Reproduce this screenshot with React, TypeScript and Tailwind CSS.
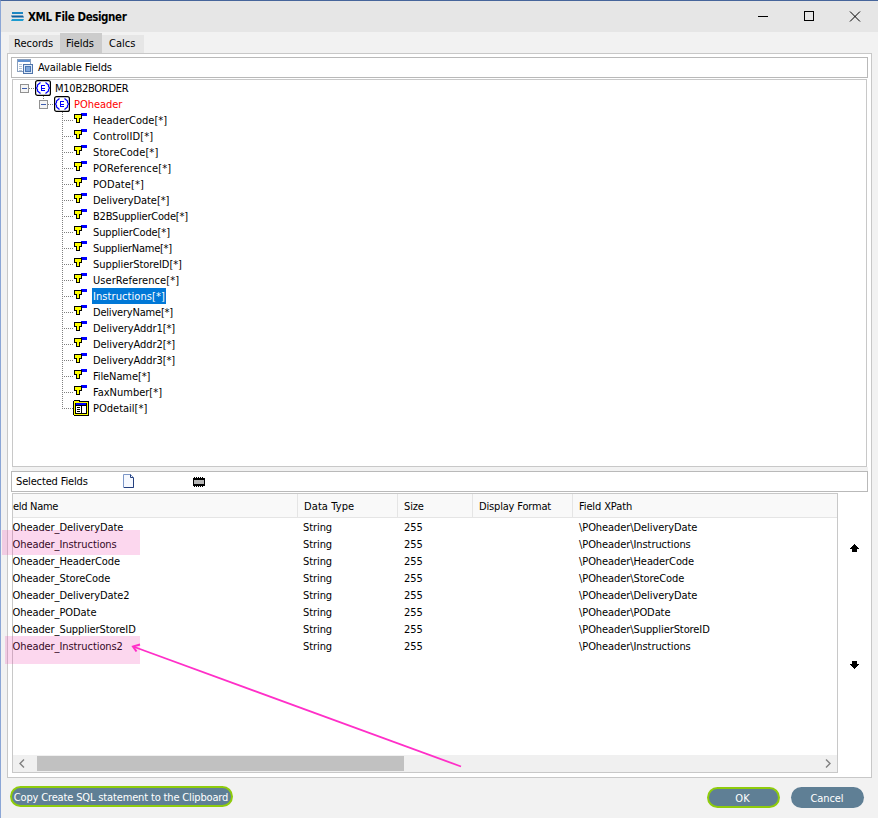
import type { ReactNode } from "react";

interface TreeField {
  name: string;
  tracking?: string;
  selected?: boolean;
}

interface SelectedField {
  name: string;
  path: string;
  highlight?: string;
}

const treeFields: TreeField[] = [
  { name: "HeaderCode" },
  { name: "ControlID", tracking: "tracking-[0.1px]" },
  { name: "StoreCode", tracking: "tracking-[0.1px]" },
  { name: "POReference", tracking: "tracking-[0.15px]" },
  { name: "PODate", tracking: "tracking-[0.1px]" },
  { name: "DeliveryDate", tracking: "tracking-[-0.07px]" },
  { name: "B2BSupplierCode", tracking: "tracking-[-0.2px]" },
  { name: "SupplierCode", tracking: "tracking-[-0.13px]" },
  { name: "SupplierName", tracking: "tracking-[-0.25px]" },
  { name: "SupplierStoreID", tracking: "tracking-[-0.07px]" },
  { name: "UserReference", tracking: "tracking-[0.07px]" },
  { name: "Instructions", tracking: "tracking-[0.07px]", selected: true },
  { name: "DeliveryName", tracking: "tracking-[-0.2px]" },
  { name: "DeliveryAddr1", tracking: "tracking-[-0.07px]" },
  { name: "DeliveryAddr2", tracking: "tracking-[-0.07px]" },
  { name: "DeliveryAddr3", tracking: "tracking-[-0.07px]" },
  { name: "FileName", tracking: "tracking-[-0.1px]" },
  { name: "FaxNumber" },
];

const selectedFields: SelectedField[] = [
  { name: "Oheader_DeliveryDate", path: "DeliveryDate" },
  { name: "Oheader_Instructions", path: "Instructions", highlight: "-left-[11px] -top-[6px] w-[138px] h-[25px]" },
  { name: "Oheader_HeaderCode", path: "HeaderCode" },
  { name: "Oheader_StoreCode", path: "StoreCode" },
  { name: "Oheader_DeliveryDate2", path: "DeliveryDate" },
  { name: "Oheader_PODate", path: "PODate" },
  { name: "Oheader_SupplierStoreID", path: "SupplierStoreID" },
  { name: "Oheader_Instructions2", path: "Instructions", highlight: "-left-[8px] -top-[2px] w-[135px] h-[28px]" },
];

function LogoIcon() {
  return (
    <svg width="13" height="10" viewBox="0 0 13 10">
      <path d="M1 0h11v2H1z" fill="#1c86c2" />
      <path d="M0 3.500h12l1 2H1z" fill="#0d5f9e" />
      <path d="M1 7h12l-1 2H0z" fill="#1c9bd0" />
    </svg>
  );
}

function FormIcon() {
  return (
    <svg width="17" height="16" viewBox="0 0 17 16" shapeRendering="crispEdges" className="mb-px">
      <rect x="0.5" y="0.5" width="13" height="12" fill="#fff" stroke="#8aa0be" />
      <rect x="1" y="1" width="12" height="2" fill="#5f8fd0" />
      <path d="M2 5.500h3M6 5.500h6M2 7.500h3M2 9.500h3M2 11.500h3" stroke="#b4c4d8" />
      <rect x="6.5" y="5.5" width="9" height="9" fill="#dce9f8" stroke="#4f74aa" />
      <rect x="8.5" y="7.5" width="5" height="5" fill="#7ea6da" stroke="#4a76b4" />
    </svg>
  );
}

function ElementIcon() {
  return (
    <svg width="16" height="16" viewBox="0 0 16 16" className="shrink-0">
      <rect x="0.6" y="0.6" width="14.800" height="14.800" rx="2" fill="#fff" stroke="#000" strokeWidth="1.200" />
      <path
        d="M5.500 2.500L2.500 5v1.500L1.500 8l1 1.500V11l3 2.500M10.500 2.500l3 2.500v1.500l1 1.500-1 1.500V11l-3 2.500"
        fill="none"
        stroke="#00f"
        strokeWidth="1.200"
      />
      <path d="M10 5.500H6.500v5H10M6.500 8.500H9.500" fill="none" stroke="#00f" shapeRendering="crispEdges" />
    </svg>
  );
}

function TextNodeIcon() {
  return (
    <svg width="14" height="11" viewBox="0 0 14 11" shapeRendering="crispEdges" className="shrink-0">
      <rect x="7" y="0" width="6" height="3" fill="#00f" />
      <path d="M0 1h8v5H6v4H2V6H0z" fill="#000" />
      <path d="M1 2h6v3H5v4H3V5H1z" fill="#ff0" />
    </svg>
  );
}

function DetailIcon() {
  return (
    <svg width="16" height="16" viewBox="0 0 16 16" shapeRendering="crispEdges" className="shrink-0">
      <path d="M1 0h5l1 1h8l1 1v13l-1 1H1l-1-1V1z" fill="#000" />
      <path d="M1 1h5v1h9v13H1z" fill="#ff0" />
      <rect x="2" y="3" width="12" height="11" fill="#000" />
      <rect x="3" y="3" width="10" height="2" fill="#00f" />
      <path d="M3 6h5v7H3zM9 6h4v7H9z" fill="#fff" />
      <path d="M4 7.500h3M4 9.500h3M4 11.500h3" stroke="#000" />
    </svg>
  );
}

function Expander({ linked }: { linked?: boolean }) {
  return (
    <svg width="9" height="16" viewBox="0 0 9 16" shapeRendering="crispEdges" className="shrink-0">
      {linked && <path d="M4.500 0v4" stroke="#808080" strokeDasharray="1 1" />}
      <rect x="0.5" y="4.500" width="8" height="8" fill="#f4f4f4" stroke="#919191" />
      <path d="M2 8.500h5" stroke="#3c5cae" />
    </svg>
  );
}

function Dots({ className }: { className: string }) {
  return (
    <svg height="1" className={`shrink-0 ${className}`} shapeRendering="crispEdges">
      <path d="M0 0.500h20" stroke="#808080" strokeDasharray="1 1" />
    </svg>
  );
}

function Field({ name, tracking = "", selected }: TreeField) {
  return (
    <div className="flex h-4 items-center">
      <Dots className="w-[11px]" />
      <div className="w-[19px] pb-[3px] pl-px">
        <TextNodeIcon />
      </div>
      <span className={`h-4 px-px leading-[18px] ${tracking} ${selected ? "bg-[#0078d7] text-white" : ""}`}>{name}[*]</span>
    </div>
  );
}

function Tab({ children, active }: { children: ReactNode; active?: boolean }) {
  return (
    <div className={`leading-4 ${active ? "h-5 w-[42px] bg-[#cccccc] pl-[6px] pt-[3px]" : "h-[18px] bg-[#e6e6e6] pl-[5px] pt-px"}`}>
      {children}
    </div>
  );
}

export default function App() {
  return (
    <div className="relative flex h-[818px] w-[878px] flex-col overflow-hidden whitespace-nowrap border-l border-t border-l-[#8ba6d6] border-t-[#46659b] bg-[#f2f2f2] font-['DejaVu_Sans_Condensed','DejaVu_Sans',sans-serif] text-[11px] text-black [font-stretch:condensed]">
      {/* Title bar */}
      <div className="flex h-[31px] shrink-0 items-center bg-[#e6e6e6] pl-[10px]">
        <LogoIcon />
        <span className="ml-1 text-[11.5px] font-bold leading-4 tracking-[-0.42px]">XML File Designer</span>
        <svg width="104" height="11" viewBox="0 0 104 11" className="ml-auto mr-4" fill="none" stroke="#000">
          <path d="M0 5.500h10" />
          <rect x="46.500" y="0.500" width="9" height="9" />
          <path d="M92 0.500l10 10M102 0.500l-10 10" />
        </svg>
      </div>

      {/* Tabs */}
      <div className="flex h-[21px] shrink-0 items-end pl-2">
        <div className="w-[51px]"><Tab>Records</Tab></div>
        <Tab active>Fields</Tab>
        <div className="w-[42px] bg-[#e6e6e6] pl-[2px]"><Tab>Calcs</Tab></div>
      </div>

      <div className="ml-[6px] h-[725px] w-[865px] shrink-0 border border-[#c8c8c8] bg-white pl-[3px] pt-[3px]">
        <div className="flex h-[21px] w-[857px] items-center border border-[#b9b9b9] pl-[5px]">
          <FormIcon />
          <span className="ml-1 pt-[2px] tracking-[-0.12px]">Available Fields</span>
        </div>

        {/* Field tree */}
        <div className="ml-px mt-px h-[388px] w-[855px] border border-[#c8c8c8]">
          <div className="flex h-4 items-center pl-[7px]">
            <Expander />
            <Dots className="w-[6px]" />
            <ElementIcon />
            <span className="ml-1 h-4 leading-[18px] tracking-[-0.25px]">M10B2BORDER</span>
          </div>
          <div className="flex h-4 items-center pl-[26px]">
            <Expander linked />
            <Dots className="w-[6px]" />
            <ElementIcon />
            <span className="ml-1 h-4 leading-[18px] tracking-[-0.05px] text-[#f00]">POheader</span>
          </div>
          <div className="flex pl-[49px]">
            <svg width="1" height="297" className="-mr-px shrink-0" shapeRendering="crispEdges">
              <path d="M0.500 0v297" stroke="#808080" strokeDasharray="1 1" />
            </svg>
            <div>
              {treeFields.map((f) => (
                <Field key={f.name} {...f} />
              ))}
              <div className="flex h-4 items-center">
                <Dots className="w-[11px]" />
                <DetailIcon />
                <span className="ml-1 h-4 leading-[18px]">POdetail[*]</span>
              </div>
            </div>
          </div>
        </div>
        <div className="ml-px h-1 w-[856px] bg-[#f2f2f2]" />

        <div className="flex h-[21px] w-[857px] items-center border border-[#b9b9b9] pl-1">
          <span className="w-[107px] pt-[2px] tracking-[-0.15px]">Selected Fields</span>
          <svg width="11" height="14" viewBox="0 0 11 14" className="mb-px">
            <path d="M0.500 0.500h7l3 3v10h-10z" fill="#f6f9ff" stroke="#7c97c8" />
            <path d="M7.500 0.500v3h3M10.500 4v9.500H1" fill="none" stroke="#25407e" />
          </svg>
          <svg width="12" height="10" viewBox="0 0 12 10" className="ml-[59px]" shapeRendering="crispEdges">
            <rect y="1" width="12" height="8" fill="#000" />
            <rect x="1" y="3" width="10" height="4" fill="#b5b5b5" />
            <path d="M1 0.500h10M1 9.500h10" stroke="#000" strokeDasharray="1 1" />
          </svg>
        </div>

        {/* Selected fields */}
        <div className="mt-px flex">
          <div className="ml-px flex h-[280px] w-[826px] flex-col border border-[#c8c8c8]">
            <div className="grid h-6 shrink-0 grid-cols-[285px_100px_75px_100px_1fr] border-b border-[#e5e5e5] bg-[#f9f9f9] leading-[26px] tracking-[-0.12px]">
              <div className="h-[23px] border-r border-[#e5e5e5] tracking-[-0.3px]">eld Name</div>
              <div className="h-[23px] border-r border-[#e5e5e5] pl-[6px] tracking-[0.1px]">Data Type</div>
              <div className="h-[23px] border-r border-[#e5e5e5] pl-[6px]">Size</div>
              <div className="h-[23px] border-r border-[#e5e5e5] pl-[6px] tracking-[-0.17px]">Display Format</div>
              <div className="h-[23px] pl-[6px]">Field XPath</div>
            </div>
            <div className="flex-1 pt-px tracking-[-0.08px]">
              {selectedFields.map((f) => (
                <div key={f.name} className="relative grid h-[17px] grid-cols-[290px_101px_175px_1fr] leading-[17px]">
                  <div><span className="-ml-[0.5px]">{f.name}</span></div>
                  <div>String</div>
                  <div>255</div>
                  <div>\POheader\{f.path}</div>
                  {f.highlight && <div className={`absolute bg-[#f037aa]/20 ${f.highlight}`} />}
                </div>
              ))}
            </div>
            <div className="flex h-[17px] items-center bg-[#f0f0f0]">
              <svg width="24" height="9" viewBox="0 0 24 9" fill="none" stroke="#808080" strokeWidth="1.400">
                <path d="M11 0.500l-4 4 4 4" />
              </svg>
              <div className="h-[15px] w-[367px] bg-[#c1c1c1]" />
              <svg width="9" height="9" viewBox="0 0 9 9" className="ml-auto mr-[3px]" fill="none" stroke="#808080" strokeWidth="1.400">
                <path d="M1 0.500l4 4-4 4" />
              </svg>
            </div>
          </div>
          <div className="ml-3 flex flex-col gap-[109px] pt-[51px]">
            <svg width="9" height="8" viewBox="0 0 9 8" shapeRendering="crispEdges">
              <path d="M4 0h1v1h1v1h1v1h1v1h1v1H7v3H2V5H0V4h1V3h1V2h1V1h1z" />
            </svg>
            <svg width="9" height="8" viewBox="0 0 9 8" shapeRendering="crispEdges">
              <path d="M2 0h5v3h2v1H8v1H7v1H6v1H5v1H4V7H3V6H2V5H1V4H0V3h2z" />
            </svg>
          </div>
        </div>
      </div>

      {/* Buttons */}
      <div className="flex pl-[9px] pt-2 text-white">
        <button className="h-[21px] w-[223px] rounded-full border-2 border-[#8fcc0c] bg-[#5f7f95] pr-px leading-[19px] tracking-[-0.15px]">
          Copy Create SQL statement to the Clipboard
        </button>
        <button className="ml-[474px] mt-px h-[21px] w-[73px] rounded-full border-2 border-[#8fcc0c] bg-[#5f7f95] pr-[2px] leading-[19px]">
          OK
        </button>
        <button className="ml-[11px] mt-px h-[21px] w-[73px] rounded-full bg-[#5f7f95] pr-px leading-[23px] tracking-[-0.1px]">Cancel</button>
      </div>

      {/* Arrow annotation */}
      <svg width="340" height="130" viewBox="0 0 340 130" className="absolute left-[129px] top-[639px]" fill="none" stroke="#ff2fc8" strokeWidth="1.800">
        <path d="M331 126.500L3 6.500" />
        <path d="M10 4.500L3 6.500l3.500 5" strokeWidth="2" />
      </svg>
    </div>
  );
}
